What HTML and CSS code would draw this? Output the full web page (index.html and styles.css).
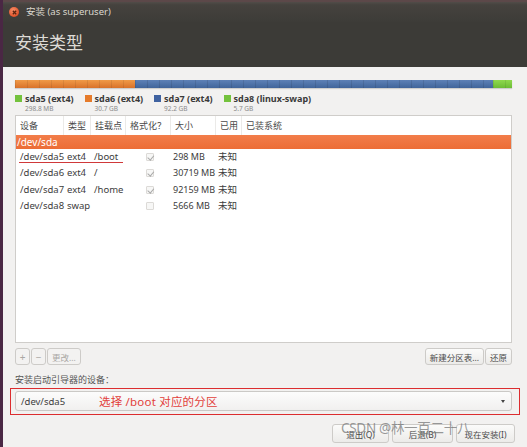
FILE: index.html
```
<!DOCTYPE html>
<html lang="zh">
<head>
<meta charset="utf-8">
<title>安装</title>
<link rel="stylesheet" href="styles.css">
</head>
<body>
<div class="window">
  <div class="titlebar">
    <span class="close"><svg width="9" height="9" viewBox="0 0 9 9"><path d="M2.8 2.8 L6.2 6.2 M6.2 2.8 L2.8 6.2" stroke="#5a2410" stroke-width="1.3"/></svg></span>
    <span class="title">安装 (as superuser)</span>
  </div>
  <div class="header">安装类型</div>
  <div class="content">
    <div class="bar">
      <div class="seg seg-orange" style="width:120px"></div>
      <div class="seg seg-blue" style="width:358px"></div>
      <div class="seg seg-green" style="width:19px"></div>
    </div>
    <div class="legend">
      <div class="leg"><span class="sq sq-green"></span><div><div class="leg-name">sda5 (ext4)</div><div class="leg-size">298.8 MB</div></div></div>
      <div class="leg"><span class="sq sq-orange"></span><div><div class="leg-name">sda6 (ext4)</div><div class="leg-size">30.7 GB</div></div></div>
      <div class="leg"><span class="sq sq-blue"></span><div><div class="leg-name">sda7 (ext4)</div><div class="leg-size">92.2 GB</div></div></div>
      <div class="leg"><span class="sq sq-green"></span><div><div class="leg-name">sda8 (linux-swap)</div><div class="leg-size">5.7 GB</div></div></div>
    </div>
    <div class="table">
      <div class="row head">
        <div class="c">设备</div><div class="c">类型</div><div class="c">挂载点</div><div class="c">格式化？</div><div class="c">大小</div><div class="c">已用</div><div class="c">已装系统</div>
      </div>
      <div class="disk">/dev/sda</div>
      <div class="row part">
        <div class="c c1 marked">/dev/sda5</div><div class="c c2">ext4</div><div class="c c3">/boot</div><div class="c c4"><span class="cb checked"></span></div><div class="c c5">298 MB</div><div class="c c6">未知</div><div class="c"></div>
      </div>
      <div class="row part">
        <div class="c c1">/dev/sda6</div><div class="c c2">ext4</div><div class="c c3">/</div><div class="c c4"><span class="cb checked"></span></div><div class="c c5">30719 MB</div><div class="c c6">未知</div><div class="c"></div>
      </div>
      <div class="row part">
        <div class="c c1">/dev/sda7</div><div class="c c2">ext4</div><div class="c c3">/home</div><div class="c c4"><span class="cb checked"></span></div><div class="c c5">92159 MB</div><div class="c c6">未知</div><div class="c"></div>
      </div>
      <div class="row part">
        <div class="c c1">/dev/sda8</div><div class="c c2">swap</div><div class="c c3"></div><div class="c c4"><span class="cb"></span></div><div class="c c5">5666 MB</div><div class="c c6">未知</div><div class="c"></div>
      </div>
    </div>
    <div class="tools">
      <div class="group">
        <span class="btn small dis">+</span><span class="btn small dis">−</span><span class="btn dis">更改...</span>
      </div>
      <div class="group">
        <span class="btn">新建分区表...</span><span class="btn">还原</span>
      </div>
    </div>
    <div class="label">安装启动引导器的设备：</div>
    <div class="highlight">
      <div class="combo">
        <span class="combo-val">/dev/sda5</span>
        <span class="note">选择 /boot 对应的分区</span>
        <span class="arrow"></span>
      </div>
    </div>
    <div class="actions">
      <span class="btn act">退出(Q)</span><span class="btn act">后退(B)</span><span class="btn act">现在安装(I)</span>
    </div>
  </div>
  <div class="watermark">CSDN @林一百二十八</div>
</div>
</body>
</html>
```
FILE: styles.css
```
* { box-sizing: border-box; }
html, body { margin: 0; padding: 0; }
body {
  width: 527px;
  height: 447px;
  overflow: hidden;
  font-family: "Noto Sans", "Noto Sans CJK SC", sans-serif;
  background: #f2f1f0;
  color: #3c3c3c;
}
.window {
  position: relative;
  width: 527px;
  height: 447px;
  border-left: 3px solid #4a2744;
  display: flex;
  flex-direction: column;
}
.titlebar {
  height: 22px;
  background: linear-gradient(#514c48 0, #45423e 3px, #3d3c38 100%);
  border-top: 2px solid #5c4849;
  display: flex;
  align-items: center;
  padding-left: 6px;
  gap: 7px;
}
.close {
  width: 10px;
  height: 10px;
  border-radius: 50%;
  background: radial-gradient(circle at 40% 35%, #f6906a, #e0532a 70%);
  display: flex;
  align-items: center;
  justify-content: center;
}
.close svg { display: block; }
.title {
  font-size: 9.5px;
  color: #dcd8cf;
  line-height: 1;
}
.header {
  height: 45px;
  background: #3c3b37;
  color: #dedbd6;
  font-size: 17px;
  padding: 9px 0 0 12px;
  line-height: 24px;
}
.content {
  flex: 1;
  padding: 13px 15px 0 12px;
  display: flex;
  flex-direction: column;
}
.bar {
  height: 8px;
  display: flex;
  box-shadow: 0 1px 1px rgba(0,0,0,0.15);
}
.seg { height: 8px; }
.seg-orange {
  background-color: #e07f2e;
  background-image: linear-gradient(90deg, rgba(0,0,0,0.08) 1px, transparent 1px), linear-gradient(#f09a48, #d9722a);
  background-size: 12px 8px, 100% 100%;
}
.seg-blue {
  background-color: #4a6da3;
  background-image: linear-gradient(90deg, rgba(0,0,0,0.1) 1px, transparent 1px), linear-gradient(#5d80b6, #40649a);
  background-size: 12px 8px, 100% 100%;
}
.seg-green {
  background-image: linear-gradient(90deg, rgba(0,0,0,0.08) 1px, transparent 1px), linear-gradient(#8fd84e, #6cbc35);
  background-size: 12px 8px, 100% 100%;
}
.legend {
  display: flex;
  margin-top: 5px;
  height: 22px;
}
.leg {
  display: flex;
  width: 69.5px;
  gap: 3px;
}
.sq {
  width: 7px;
  height: 7px;
  margin-top: 2px;
  flex: none;
}
.sq-green { background: #74c23d; }
.sq-orange { background: #e67b2a; }
.sq-blue { background: #3f62a0; }
.leg-name {
  font-size: 9px;
  font-weight: bold;
  color: #3a3a3a;
  line-height: 11px;
  height: 11px;
  white-space: nowrap;
}
.leg-size {
  font-size: 6.5px;
  color: #8a8a8a;
  line-height: 9px;
  height: 9px;
}
.table {
  height: 228px;
  background: #fff;
  border: 1px solid #cfcdca;
}
.row {
  display: grid;
  grid-template-columns: 48px 27px 35px 45px 45px 26px 1fr;
}
.head {
  height: 19px;
  align-items: center;
  font-size: 9px;
  color: #4a4a4a;
}
.head .c {
  padding-left: 4px;
  border-right: 1px solid #ebeae8;
  line-height: 19px;
  height: 19px;
}
.head .c:last-child { border-right: none; }
.disk {
  height: 14px;
  background: linear-gradient(#f27d4a, #ec6d36);
  color: #fff;
  font-size: 10px;
  line-height: 14px;
  padding-left: 1px;
}
.part {
  height: 16.3px;
  font-size: 9.5px;
  align-items: center;
  color: #3c3c3c;
  line-height: 16px;
}
.c1 { padding-left: 4px; }
.c2, .c3 { padding-left: 3px; }
.c5, .c6 { padding-left: 2px; white-space: nowrap; font-size: 9px; }
.c6 { font-size: 9.5px; }
.c4 {
  display: flex;
  justify-content: center;
  align-items: center;
  padding-left: 3px;
}
.marked { position: relative; }
.marked::after {
  content: "";
  position: absolute;
  left: 3px;
  top: 13px;
  width: 104px;
  height: 1px;
  background: #d0393a;
}
.cb {
  width: 8px;
  height: 8px;
  border: 1px solid #dcdad7;
  border-radius: 1px;
  background: #f7f7f6;
  position: relative;
}
.cb.checked::after {
  content: "";
  position: absolute;
  left: 1.5px;
  top: 0px;
  width: 2.5px;
  height: 4.5px;
  border-right: 1px solid #a8a8a8;
  border-bottom: 1px solid #a8a8a8;
  transform: rotate(40deg);
}
.tools {
  display: flex;
  justify-content: space-between;
  margin-top: 5px;
  height: 18px;
}
.group { display: flex; gap: 1px; }
.btn {
  display: inline-flex;
  align-items: center;
  justify-content: center;
  height: 17px;
  padding: 0 4px;
  border: 1px solid #cdcbc8;
  border-radius: 3px;
  background: linear-gradient(#fbfbfa, #ecebe9);
  font-size: 8.5px;
  color: #4a4a4a;
  white-space: nowrap;
}
.btn.small { width: 15px; padding: 0; font-size: 10px; }
.btn.dis { color: #a9a7a4; background: #f3f2f1; }
.label {
  margin-top: 8px;
  font-size: 9px;
  color: #555;
  line-height: 12px;
}
.highlight {
  margin: 2px -8px 0 -5px;
  border: 1px solid #dc2d2f;
  padding: 2px 7px 3px 4px;
}
.combo {
  height: 20px;
  border: 1px solid #cbc9c6;
  border-radius: 3px;
  background: linear-gradient(#fcfcfc, #f1f0ef);
  display: flex;
  align-items: center;
  padding-left: 5px;
  position: relative;
}
.combo-val {
  font-size: 9.5px;
  color: #3c3c3c;
  width: 78px;
}
.note {
  font-size: 11.5px;
  color: #e2403a;
  letter-spacing: 0.2px;
}
.arrow {
  position: absolute;
  right: 6px;
  top: 8px;
  width: 0;
  height: 0;
  border-left: 2.5px solid transparent;
  border-right: 2.5px solid transparent;
  border-top: 3px solid #444;
}
.actions {
  display: flex;
  justify-content: flex-end;
  gap: 3px;
  margin-top: 9px;
  margin-right: -3px;
}
.btn.act {
  height: 19px;
  width: 57px;
  font-size: 8.5px;
}
.btn.act:nth-child(2) { width: 61px; }
.btn.act:nth-child(3) { width: 59px; }
.watermark {
  position: absolute;
  left: 338px;
  top: 417px;
  font-size: 13.5px;
  color: rgba(120,120,120,0.75);
  white-space: nowrap;
  letter-spacing: -0.3px;
}
```
